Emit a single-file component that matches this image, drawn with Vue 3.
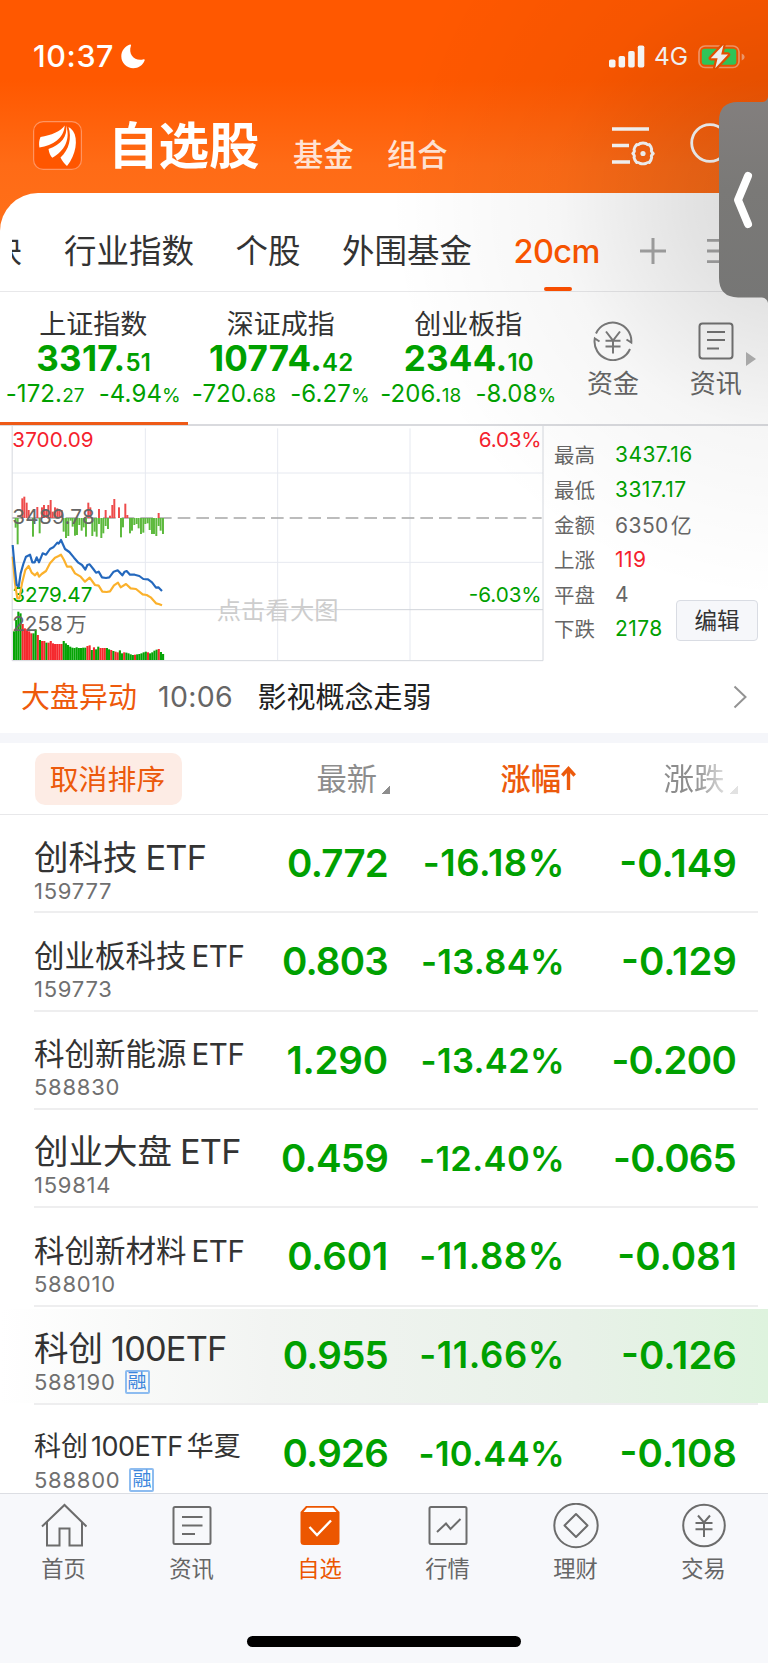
<script setup>
const tabs = ['行业指数', '个股', '外围基金']

const indices = [
  { name: '上证指数', int: '3317.', dec: '51', chg: '-172.', chgDec: '27', pct: '-4.94' },
  { name: '深证成指', int: '10774.', dec: '42', chg: '-720.', chgDec: '68', pct: '-6.27' },
  { name: '创业板指', int: '2344.', dec: '10', chg: '-206.', chgDec: '18', pct: '-8.08' }
]

const stats = [
  { label: '最高', value: '3437.16', tone: 'down' },
  { label: '最低', value: '3317.17', tone: 'down' },
  { label: '金额', value: '6350', unit: '亿', tone: 'flat' },
  { label: '上涨', value: '119', tone: 'up' },
  { label: '平盘', value: '4', tone: 'flat' },
  { label: '下跌', value: '2178', tone: 'down' }
]

const rows = [
  { cn: '创科技', en: 'ETF', code: '159777', price: '0.772', pct: '-16.18%', diff: '-0.149', big: true, bigPct: true },
  { cn: '创业板科技', en: 'ETF', code: '159773', price: '0.803', pct: '-13.84%', diff: '-0.129' },
  { cn: '科创新能源', en: 'ETF', code: '588830', price: '1.290', pct: '-13.42%', diff: '-0.200' },
  { cn: '创业大盘', en: 'ETF', code: '159814', price: '0.459', pct: '-12.40%', diff: '-0.065', big: true },
  { cn: '科创新材料', en: 'ETF', code: '588010', price: '0.601', pct: '-11.88%', diff: '-0.081', bigPct: true },
  { cn: '科创', en: '100ETF', code: '588190', price: '0.955', pct: '-11.66%', diff: '-0.126', big: true, bigPct: true, margin: true, hot: true },
  { cn: '科创', en: '100ETF', tail: '华夏', code: '588800', price: '0.926', pct: '-10.44%', diff: '-0.108', small: true, margin: true }
]

/* The digit 1 is narrow, so numbers without it are set a little tighter. */
const tight = (v) => !v.includes('1')

/* Chart geometry uses a 3x grid: one viewBox unit is a third of a pixel. */
const BASE = 294
const flow = [
  [47, 323], [53, 373], [67, 235], [73, 230], [80, 248], [86, 270], [99, 350], [112, 261], [119, 340],
  [126, 262], [132, 255], [139, 270], [145, 255], [152, 240], [158, 275], [165, 262], [172, 265], [178, 268], [185, 270],
  [191, 335], [198, 354], [205, 348], [212, 302], [218, 320], [225, 347], [231, 345], [238, 315], [245, 332],
  [251, 322], [258, 350], [265, 248], [271, 262], [277, 348], [284, 335], [290, 350], [297, 267], [297, 312], [304, 354],
  [310, 340], [317, 270], [317, 318], [324, 327], [330, 287], [337, 255], [343, 237], [357, 262], [363, 352], [369, 322],
  [376, 251], [382, 285], [390, 340], [396, 332], [403, 315], [410, 312], [416, 325], [423, 342], [430, 338],
  [436, 312], [443, 310], [449, 330], [456, 342], [462, 342], [469, 348], [476, 279], [476, 318], [482, 332], [489, 342]
].map(([x, y]) => ({ x: x - 3, y: Math.min(y, BASE), h: Math.abs(y - BASE), c: y < BASE ? '#ee4b4b' : '#5cb93c' }))

const volume = (
  '634g 600g 575g 580g 612r 625r 628r 634r 640r 640g 628g 645r 660g 663r 663r 668g 668r 663r 670r 672r 672r 672r 672r ' +
  '663g 670g 675g 680g 683g 684g 682g 684g 684g 683g 683g 678r 676r 690g 682r 688g 680g 684r 684r 684r 684g 688g 690r 693g ' +
  '695r 697r 691g 700g 697r 698g 700g 703g 705g 704r 703g 702g 700g 697g 695g 697r 700g 697g 692g 689g 687r 696g 702g'
).split(' ').map((v, i) => {
  const y = parseInt(v)
  return { x: 39 + i * 6.48, y, h: 720 - y, c: v.endsWith('g') ? '#04a304' : '#f5282d' }
})

const blue = '38,375 43,430 50,495 56,500 62,460 70,432 78,410 90,404 97,427 104,427 110,412 117,427 128,400 138,404 150,387 160,382 172,368 176,371 183,360 195,387 208,396 222,413 235,428 246,435 256,449 262,435 269,433 280,447 288,458 296,455 306,472 318,474 328,472 341,455 353,451 367,466 374,455 380,453 390,464 404,464 418,468 430,477 444,478 456,487 468,503 475,502 486,513'
const yellow = '38,410 45,490 52,535 58,535 66,490 76,450 86,438 95,458 105,466 112,458 117,470 125,462 138,453 150,430 165,413 176,408 183,404 192,420 201,440 213,440 225,460 242,470 255,485 269,473 285,495 296,497 307,515 320,516 330,514 342,496 354,488 362,502 378,492 392,505 408,507 428,523 440,525 452,532 468,550 476,552 486,556'
</script>

<template>
  <div class="screen">
    <header class="top">
      <div class="status">
        <span class="clock">10:37</span>
        <svg class="moon" width="24" height="25" viewBox="0 0 24 25"><path d="M9 .5C4 2.200 .3 6.800 .3 12.300A12 12 0 0 0 12.300 24.200C17.500 24.200 22 21 23.700 16.200A.8.8 0 0 0 22.700 15.200C15 18 6.500 11.500 10 1.600A.8.8 0 0 0 9 .5Z" fill="#fff"/></svg>
        <span class="grow"></span>
        <svg width="36" height="23" viewBox="0 0 36 23" fill="#fff"><rect x="0" y="14.500" width="6.500" height="8" rx="1.800"/><rect x="9.600" y="11" width="6.500" height="11.500" rx="1.800"/><rect x="19.200" y="6" width="6.500" height="16.500" rx="1.800"/><rect x="28.800" y="0.500" width="6.500" height="22" rx="1.800"/></svg>
        <span class="net">4G</span>
        <svg width="48" height="25" viewBox="0 0 48 25"><rect x="1" y="2" width="40" height="21.500" rx="6" fill="none" stroke="#fff" stroke-opacity=".42" stroke-width="1.700"/><path d="M43.700 9.500q3 1.200 3 3.500t-3 3.500z" fill="#fff" fill-opacity=".45"/><rect x="3.800" y="4.800" width="34.500" height="16" rx="3" fill="#34d45f"/><path d="M25.500.8 12.800 14.200H19.600L17.200 24.200 30 10.600H23.200Z" fill="#fff" stroke="#f45400" stroke-width="4.500" stroke-linejoin="round" paint-order="stroke"/></svg>
      </div>
      <div class="titlebar">
        <svg width="49" height="49" viewBox="0 0 49 49"><rect x=".6" y=".6" width="47.800" height="47.800" rx="9.500" fill="#ff5600" stroke="#ff9460" stroke-width="1.200"/><g fill="#fff"><path d="M31.700 4.500C28 10 18 14.500 7.500 16C6 19 5.800 23 6.400 26.500C20 24.500 31 17 31.700 4.500Z"/><path d="M33 4.500C35 15 28 24 15.500 28C16 32 17.500 35 19.300 36.800C31.500 30 38 18 33 4.500Z"/><path d="M35.500 6C39 17 36 29 27.500 36.500C29.200 40 31.500 43 34 45C43 34 45.500 18 40 10C38.500 8 37 6.800 35.500 6Z"/></g></svg>
        <h1>自选股</h1>
        <span class="sub first">基金</span>
        <span class="sub">组合</span>
        <span class="grow"></span>
        <svg class="filter" width="44" height="40" viewBox="0 0 44 40" fill="none" stroke="#fff"><path d="M0 3H37M0 19.500H17M0 36H18" stroke-width="3.400"/><path d="M24.700 18.500Q26.500 19.200 28 17.500Q31 16.500 34 17.500Q35.500 19.200 37.300 18.500Q39.300 20.700 39.700 23.200Q38.500 25 41.300 27.500Q38.500 29.700 39.700 31.500Q39.300 34 37.300 36.500Q35.300 36 33.800 37.500Q31 38.300 28.200 37.500Q26.700 36 24.700 36.500Q22.500 34 22 31.500Q23.200 29.700 20.800 27.500Q23.200 25.300 22 23.500Q22.700 20.700 24.700 18.500Z" stroke-width="2.900" stroke-linejoin="round"/><circle cx="31" cy="27.500" r="2.600" fill="#fff" stroke="none"/></svg>
        <svg class="search" width="54" height="48" viewBox="0 0 54 48" fill="none" stroke="#fff" stroke-width="2.800"><circle cx="20" cy="20" r="18.300"/><path d="M33 33l10 10"/></svg>
      </div>
    </header>

    <section class="sheet">
      <nav class="tabs">
        <span class="cut"><i>块</i></span>
        <span v-for="t in tabs" :key="t" class="tab">{{ t }}</span>
        <span class="tab active">20cm</span>
        <svg class="plus" width="26" height="26" viewBox="0 0 26 26" stroke="#a8a8a8" stroke-width="3"><path d="M13 0V26M0 13H26"/></svg>
        <svg class="lines" width="26" height="26" viewBox="0 0 26 26" stroke="#a8a8a8" stroke-width="2.800"><path d="M0 2.300H26M0 13H26M0 23.700H26"/></svg>
      </nav>

      <div class="indices">
        <div v-for="(x, i) in indices" :key="x.name" class="index" :class="{ on: i === 0 }">
          <div class="iname">{{ x.name }}</div>
          <div class="ival">{{ x.int }}<small>{{ x.dec }}</small></div>
          <div class="ichg"><span>{{ x.chg }}<small>{{ x.chgDec }}</small></span><span>{{ x.pct }}<small>%</small></span></div>
        </div>
        <div class="tool money">
          <svg width="40" height="40" viewBox="0 0 40 40" fill="none" stroke="#7b7b7b" stroke-width="2"><path d="M3 12.500A18.500 18.500 0 0 1 38.300 21.500L33.500 18.500M37 28A18.500 18.500 0 0 1 1.800 17.500L6.500 20.500"/><path d="M13 10.500 20 19.500 27 10.500M20 19.500V32.500M12.500 19.800H27.500M12.500 25.500H27.500"/></svg>
          <span>资金</span>
        </div>
        <div class="tool news">
          <svg width="36" height="38" viewBox="0 0 36 38" fill="none" stroke="#767676" stroke-width="2"><rect x="1.500" y="1.500" width="33" height="35" rx="3"/><path d="M9 10H27M9 18H27M9 26.500H21"/></svg>
          <span>资讯</span>
        </div>
        <i class="more"></i>
      </div>

      <div class="market">
        <svg class="chart" width="545" height="240" viewBox="0 1266 1635 720">
          <g transform="translate(0 1260)">
            <g fill="none" stroke="#e6e9f0" stroke-width="3">
              <path d="M37 159H1629M37 427H1629M436 25V720M833 25V720M1230 25V720" />
              <path d="M36.500 15V722H1629V15" stroke="#d5d8de" /><path d="M36 569H1629" stroke="#d0d3da" />
            </g>
            <path d="M37 294H1625" stroke="#a6a6a6" stroke-width="4.500" stroke-dasharray="38 18" stroke-dashoffset="8" />
            <rect v-for="(b, i) in flow" :key="'f' + i" :x="b.x" :y="b.y" width="5.900" :height="b.h" :fill="b.c" />
            <rect v-for="(b, i) in volume" :key="'v' + i" :x="b.x" :y="b.y" width="6.300" :height="b.h" :fill="b.c" />
            <g class="lab">
              <text x="37" y="80" fill="#f5222d" textLength="244">3700.09</text>
              <text x="37" y="313" fill="#666" textLength="247">3489.78</text>
              <text x="37" y="546" fill="#00a000" textLength="240">3279.47</text>
              <text x="37" y="633" fill="#666" textLength="151">2258</text>
              <text x="198" y="635" fill="#666">万</text>
              <text x="1436" y="80" fill="#f5222d" textLength="189">6.03%</text>
              <text x="1406" y="546" fill="#00a000" textLength="219">-6.03%</text>
              <text x="650" y="596" fill="#cdcdcd" class="wm" textLength="366">点击看大图</text>
            </g>
            <polyline :points="yellow" fill="none" stroke="#fbb12c" stroke-width="6.500" stroke-linejoin="round" />
            <polyline :points="blue" fill="none" stroke="#2468bd" stroke-width="6.500" stroke-linejoin="round" />
          </g>
        </svg>
        <div class="stats">
          <div v-for="s in stats" :key="s.label" class="stat"><span>{{ s.label }}</span><b :class="s.tone">{{ s.value }}<em v-if="s.unit">{{ s.unit }}</em></b></div>
          <button class="edit">编辑</button>
        </div>
      </div>

      <div class="flash">
        <span class="ftag">大盘异动</span><span class="ftime">10:06</span><span class="ftext">影视概念走弱</span>
        <span class="grow"></span>
        <svg class="go" width="14" height="24" viewBox="0 0 14 24" fill="none" stroke="#939393" stroke-width="2"><path d="M1.500 1.500 12.500 12 1.500 22.500"/></svg>
      </div>
    </section>

    <div class="band"></div>

    <div class="sort">
      <span class="cancel">取消排序</span>
      <span class="col c1">最新<i></i></span>
      <span class="col c2">涨幅<svg width="15" height="24" viewBox="0 0 15 24" fill="none" stroke="#ec5a0c" stroke-width="3.400"><path d="M7.500 24V3M1.300 9.500 7.500 2.600 13.700 9.500"/></svg></span>
      <span class="col c3">涨跌<i></i></span>
    </div>

    <main class="list">
      <div v-for="r in rows" :key="r.code" class="row" :class="{ hot: r.hot, big: r.big, small: r.small }">
        <div class="who">
          <div class="name">{{ r.cn }}<span class="en">{{ r.en }}</span><span v-if="r.tail" class="tail">{{ r.tail }}</span></div>
          <div class="code">{{ r.code }}<span v-if="r.margin" class="badge">融</span></div>
        </div>
        <div class="price" :class="{ tight: tight(r.price) }">{{ r.price }}</div>
        <div class="pct" :class="{ wide: r.bigPct }">{{ r.pct }}</div>
        <div class="diff" :class="{ tight: tight(r.diff) }">{{ r.diff }}</div>
      </div>
    </main>

    <footer class="bar">
      <div class="item"><svg width="48" height="46" viewBox="0 0 48 46"><path d="M2 23.500 24.500 2 46.500 23.500M7 19V42.500H19.500V25.500H29.500V42.500H42V19" /></svg><span>首页</span></div>
      <div class="item"><svg width="48" height="46" viewBox="0 0 48 46"><rect x="5.500" y="4" width="37" height="37" rx="1.500"/><path d="M14 14H34.500M14 22.500H34.500M14 31H27"/></svg><span>资讯</span></div>
      <div class="item on"><svg width="48" height="46" viewBox="0 0 48 46"><path class="solid" d="M10 3H38L43.500 9V38.500Q43.500 42 40 42H8Q4.500 42 4.500 38.500V9Z"/><path d="M7.500 9 11 4.800H37L40.500 9Z" fill="#fff" stroke="none"/><path class="tick" d="M13.500 24 21 32 35 17.500"/></svg><span>自选</span></div>
      <div class="item"><svg width="48" height="46" viewBox="0 0 48 46"><rect x="5.500" y="4" width="37" height="37" rx="1.500"/><path d="M13 29 22 20.500 26.500 26 36.500 16"/></svg><span>行情</span></div>
      <div class="item"><svg width="48" height="46" viewBox="0 0 48 46"><circle cx="24" cy="22.500" r="21.700"/><path d="M24 11 35.500 22.500 24 34 12.500 22.500Z" stroke-linejoin="round"/></svg><span>理财</span></div>
      <div class="item"><svg width="48" height="46" viewBox="0 0 48 46"><circle cx="24" cy="22.500" r="20.800"/><path d="M18 12.500 24 19.500 30 12.500M24 19.500V34M15.500 20H32.500M15.500 26.300H32.500"/></svg><span>交易</span></div>
      <div class="homebar"></div>
    </footer>

    <div class="shade"></div>
    <svg class="handle" width="49" height="206" viewBox="0 0 49 206"><path d="M49 0Q48 5 43 5H19Q0 5 0 24V181Q0 200 19 200.500H43Q48 201 49 206Z" fill="url(#hg)"/><defs><linearGradient id="hg" x1="0" y1="0" x2="0" y2="1"><stop offset="0" stop-color="#837f7e"/><stop offset=".45" stop-color="#7a7977"/><stop offset="1" stop-color="#767675"/></linearGradient></defs><path d="M29 79 19 103 29 127" fill="none" stroke="#fff" stroke-width="8" stroke-linecap="round" stroke-linejoin="round"/></svg>
  </div>
</template>

<style>
html, body { margin: 0; background: #fff; }
</style>

<style scoped>
.screen { position: relative; width: 768px; height: 1663px; overflow: hidden; background: #fff; font-family: Inter, "Noto Sans CJK SC", sans-serif; color: #333; white-space: nowrap; }
.screen * { box-sizing: border-box; }
.grow { flex: 1; }
svg { display: block; flex: none; }

.top { height: 233px; background: linear-gradient(#ff5800 0, #ff5800 80px, #ff6b16 165px, #ff7019 232px); }
.status { display: flex; align-items: center; height: 112px; padding: 0 22px 0 33px; color: #fff; }
.clock { font-size: 30.500px; font-weight: 550; letter-spacing: .6px; line-height: 36px; width: 88px; margin-top: -1px; }
.net { font-size: 24.500px; margin: 0 11px 0 9px; width: 33px; }
.titlebar { display: flex; align-items: flex-start; height: 80px; padding: 9px 0 0 33px; }
.titlebar h1 { margin: 0 0 0 26px; font-size: 50.500px; line-height: 50px; font-weight: 600; color: #fff; width: 155px; }
.sub { font-size: 30.300px; line-height: 36px; font-weight: 500; color: #ffe3d4; margin: 16px 0 0 33px; width: 61px; }
.sub.first { margin-left: 30px; }
.filter { margin: 5px 34px 0 0; }
.search { margin: 2px 24px 0 0; }

.sheet { position: relative; height: 540.500px; margin-top: -40.500px; background: #fff; border-radius: 38px 0 0 0; }
.tabs { display: flex; align-items: center; height: 99.500px; padding: 18.500px 0 0 12px; border-bottom: 1px solid #e8e8ea; font-size: 32.500px; }
.cut { width: 10px; height: 32px; overflow: hidden; margin-right: 42px; line-height: 32px; display: flex; justify-content: flex-end; }
.cut i { font-style: normal; }
.tab { margin-right: 41.500px; line-height: 44px; position: relative; top: 1px; }
.tab.active { color: #ff5600; font-weight: 500; letter-spacing: -.6px; width: 87px; margin-right: 39px; }
.tab.active::after { content: ""; position: absolute; left: 30px; top: 57px; width: 28px; height: 4px; border-radius: 2px; background: #ff5000; }
.plus { margin-right: 41px; }

.indices { display: flex; position: relative; height: 134px; border-bottom: 2px solid #d9dade; }
.index { width: 188px; text-align: center; padding-top: 18.500px; margin-bottom: -1px; }
.index.on { border-bottom: 3px solid #ee5a17; }
.iname { font-size: 27px; line-height: 28px; height: 28px; padding-right: 1px; }
.ival { font-size: 35px; line-height: 36px; font-weight: 650; letter-spacing: .25px; color: #00a000; margin-top: 1px; height: 36px; }
.ival small { font-size: 24px; font-weight: 600; }
.ichg { display: flex; justify-content: center; gap: 14px; font-size: 24px; line-height: 30px; letter-spacing: .1px; color: #00a000; height: 30px; margin-top: 3px; padding-right: 1px; }
.ichg small { font-size: 19px; }
.tool { display: flex; flex-direction: column; align-items: center; font-size: 26px; color: #666; }
.tool span { line-height: 30px; }
.money { width: 101px; padding-top: 29px; }
.money span { margin-top: 8px; }
.news { width: 105px; padding-top: 30px; }
.news span { margin-top: 9px; }
.more { position: absolute; left: 746px; top: 60px; border-left: 10px solid #b5b5b5; border-top: 7px solid transparent; border-bottom: 7px solid transparent; }

.market { display: flex; height: 238px; }
.chart { margin-top: -4px; }
.lab { font-size: 62px; }
.wm { font-size: 73px; }
.stats { position: relative; padding: 11px 0 0 9px; width: 223px; }
.stat { display: flex; align-items: center; height: 34.800px; font-size: 20.500px; color: #666; }
.stat span { width: 61px; }
.stat b { font-weight: 400; font-size: 21px; letter-spacing: .45px; padding-top: 1px; }
.stat em { font-style: normal; margin-left: 2px; }
.stat .up { color: #f5222d; }
.stat .down { color: #00a000; }
.edit { position: absolute; left: 131px; top: 174px; width: 82px; height: 41px; padding: 0; border: 1px solid #d9dce3; border-radius: 4px; background: #f6f7fa; font: 22.500px/36px Inter, "Noto Sans CJK SC", sans-serif; color: #333; }

.flash { display: flex; align-items: center; height: 66px; padding: 0 21px 4px; font-size: 29px; color: #222; }
.ftag { color: #ee5a0c; width: 137px; }
.ftime { color: #666; font-size: 28.500px; letter-spacing: .3px; width: 99.500px; padding-top: 3px; }
.go { margin-top: 3px; }

.band { height: 10px; background: #f5f6fa; }
.sort { position: relative; display: flex; align-items: center; height: 72px; border-bottom: 1px solid #e8e8ea; font-size: 30.300px; color: #8d8d8d; }
.cancel { margin-left: 35px; width: 147px; height: 52px; padding-right: 2px; border-radius: 10px; background: #fdece5; color: #ec5a0c; font-size: 28.900px; line-height: 54px; text-align: center; }
.col { display: flex; align-items: center; line-height: 40px; }
.col i { width: 9px; height: 9px; margin: 22px 0 0 4px; background: linear-gradient(135deg, transparent 50%, #8d8d8d 50%); }
.c1 { margin-left: 134.500px; width: 184px; }
.c2 { width: 163px; color: #ec5a0c; font-weight: 500; }
.c2 svg { margin-top: -1px; }
.c3 { font-size: 30.500px; -webkit-mask: linear-gradient(90deg, #000 40%, rgba(0, 0, 0, .25) 85%); mask: linear-gradient(90deg, #000 40%, rgba(0, 0, 0, .25) 85%); }

.list { height: 678px; overflow: hidden; }
.row { position: relative; display: flex; height: 98.330px; }
.row::after { content: ""; position: absolute; left: 34px; right: 10px; bottom: 0; height: 2px; background: #eeeeef; }
.row.hot::before { content: ""; position: absolute; left: 0; right: 0; top: 2px; bottom: 2px; background: linear-gradient(90deg, rgba(240, 242, 240, 0) 0, #f2f4f2 35%, #e8f1e8 75%, #def3de 100%); }
.who { position: relative; width: 228px; padding: 22.500px 0 0 34px; }
.name { font-size: 30.500px; line-height: 40px; height: 40px; display: flex; }
.en { font-size: 29.500px; margin-left: 5px; letter-spacing: -.4px; }
.big .name { font-size: 34.500px; }
.big .en { font-size: 34.300px; margin-left: 8px; letter-spacing: -.8px; }
.small .name { font-size: 27px; }
.small .en { font-size: 27px; margin-left: 3px; letter-spacing: -.5px; }
.tail { margin-left: 4px; }
.code { display: flex; align-items: center; font-size: 22px; line-height: 26px; height: 26px; letter-spacing: .75px; color: #707070; }
.badge { margin-left: 9px; width: 25px; height: 24px; border: 2px solid #8dbcf0; border-radius: 2px; font-size: 19px; line-height: 19px; letter-spacing: 0; color: #3d86dc; text-align: center; display: flex; justify-content: center; }
.price, .pct, .diff { position: relative; line-height: 97px; text-align: right; font-weight: 600; color: #00a000; font-size: 38.500px; }
.price { width: 161px; letter-spacing: -.2px; padding-right: 1px; }
.pct { width: 176px; font-size: 34.500px; letter-spacing: .35px; }
.pct.wide { font-size: 36.500px; letter-spacing: .55px; }
.diff { width: 172px; }
.diff.tight { padding-right: 1px; }
.price.tight, .diff.tight { letter-spacing: -.8px; }

.bar { position: relative; display: flex; height: 170px; background: #f7f8fb; border-top: 1px solid #dcdee3; }
.item { width: 128px; padding: 9px 1px 0 0; display: flex; flex-direction: column; align-items: center; font-size: 22.300px; color: #666; }
.item svg { fill: none; stroke: #6c6c6c; stroke-width: 2; }
.item span { line-height: 28px; margin-top: 5.500px; }
.item.on { color: #ec5600; }
.item.on .solid { fill: #ec5600; stroke: none; }
.item.on .tick { stroke: #fff; stroke-width: 2.400; }
.homebar { position: absolute; left: 247px; top: 142px; width: 274px; height: 11px; border-radius: 6px; background: #000; }

.shade { position: absolute; left: 368px; top: 0; width: 400px; height: 700px; background: radial-gradient(ellipse 400px 400px at 420px 200px, rgba(0, 0, 0, .15) 0, rgba(0, 0, 0, .11) 25%, rgba(0, 0, 0, .035) 58%, rgba(0, 0, 0, 0) 100%); pointer-events: none; }
.handle { position: absolute; left: 719px; top: 97px; }
</style>
